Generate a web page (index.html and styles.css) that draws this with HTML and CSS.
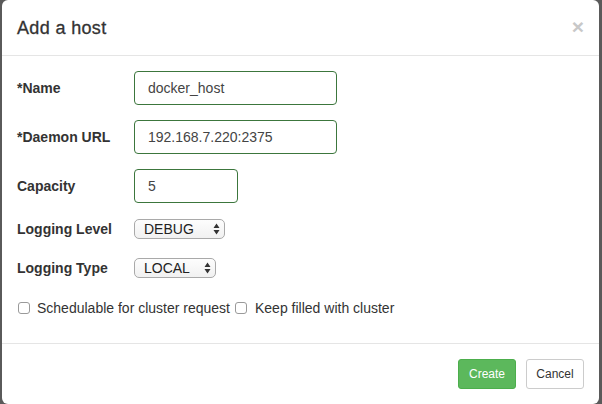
FILE: index.html
```html
<!DOCTYPE html>
<html>
<head>
<meta charset="utf-8">
<link rel="stylesheet" href="styles.css">
</head>
<body>
<div class="modal">
  <div class="modal-header">
    <h4 class="title">Add a host</h4>
    <span class="close">×</span>
  </div>
  <div class="modal-body">
    <div class="row row-input">
      <label class="lbl">*Name</label>
      <input class="field field-lg" type="text" value="docker_host">
    </div>
    <div class="row row-input">
      <label class="lbl">*Daemon URL</label>
      <input class="field field-lg" type="text" value="192.168.7.220:2375">
    </div>
    <div class="row row-input row-last-input">
      <label class="lbl">Capacity</label>
      <input class="field field-sm" type="text" value="5">
    </div>
    <div class="row row-select">
      <label class="lbl">Logging Level</label>
      <div class="select select-level">
        <span class="select-text">DEBUG</span>
        <svg class="arrows" width="7" height="12" viewBox="0 0 7 12"><path d="M3.5 0.5 L6.5 5 H0.5 Z M3.5 11.5 L6.5 7 H0.5 Z" fill="#333"/></svg>
      </div>
    </div>
    <div class="row row-select row-select-last">
      <label class="lbl">Logging Type</label>
      <div class="select select-type">
        <span class="select-text">LOCAL</span>
        <svg class="arrows" width="7" height="12" viewBox="0 0 7 12"><path d="M3.5 0.5 L6.5 5 H0.5 Z M3.5 11.5 L6.5 7 H0.5 Z" fill="#333"/></svg>
      </div>
    </div>
    <div class="row row-check">
      <span class="check"></span>
      <span class="check-text">Schedulable for cluster request</span>
      <span class="check check-second"></span>
      <span class="check-text">Keep filled with cluster</span>
    </div>
  </div>
  <div class="modal-footer">
    <button class="btn btn-success">Create</button>
    <button class="btn btn-default">Cancel</button>
  </div>
</div>
</body>
</html>
```
FILE: styles.css
```css
html, body {
  margin: 0;
  padding: 0;
  height: 100%;
  overflow: hidden;
}
body {
  background: #5a5a5a;
  font-family: "Liberation Sans", Arial, sans-serif;
  color: #333;
  font-size: 14px;
}
.modal {
  margin: 0 3px 0 2px;
  background: #fff;
  border-radius: 6px;
  display: flex;
  flex-direction: column;
}
.modal-header,
.modal-body,
.modal-footer {
  flex-shrink: 0;
}
.modal-header {
  height: 55px;
  border-bottom: 1px solid #e5e5e5;
  padding: 0 15px;
  display: flex;
  align-items: center;
  justify-content: space-between;
}
.title {
  margin: 0;
  font-size: 18px;
  font-weight: normal;
  letter-spacing: 0.35px;
  color: #333;
  padding-top: 1px;
  -webkit-text-stroke: 0.3px #333;
}
.close {
  font-size: 21px;
  font-weight: bold;
  color: #c8c8c8;
  line-height: 1;
  margin-top: -2px;
}
.modal-body {
  padding: 15px 15px 25px;
  display: flex;
  flex-direction: column;
}
.row {
  display: flex;
  align-items: center;
}
.row-input {
  height: 34px;
  margin-bottom: 15px;
}
.row-last-input {
  margin-bottom: 16px;
}
.row-select {
  height: 20px;
  margin-bottom: 19px;
}
.row-select-last {
  margin-bottom: 20px;
}
.row-check {
  height: 20px;
}
.lbl {
  width: 117px;
  font-weight: bold;
  font-size: 14px;
  color: #333;
}
.field {
  box-sizing: border-box;
  height: 34px;
  border: 1px solid #3c763d;
  border-radius: 4px;
  padding: 0 13px;
  font-family: "Liberation Sans", Arial, sans-serif;
  font-size: 14px;
  color: #444;
  background: #fff;
  outline: none;
}
.field-lg {
  width: 203px;
}
.field-sm {
  width: 104px;
}
.select {
  box-sizing: border-box;
  height: 20px;
  border: 1px solid #a9a9a9;
  border-radius: 5px;
  background: linear-gradient(#fdfdfd, #f1f1f1);
  display: flex;
  align-items: center;
  justify-content: space-between;
  padding: 0 4px 0 9px;
}
.select-level {
  width: 91px;
}
.select-type {
  width: 82px;
}
.select-text {
  font-size: 14px;
  color: #222;
}
.arrows {
  display: block;
}
.check {
  box-sizing: border-box;
  width: 12px;
  height: 12px;
  border: 1px solid #9a9a9a;
  border-radius: 3px;
  background: #fff;
  margin-left: 1px;
  margin-right: 7px;
}
.check-second {
  margin-left: 5px;
  margin-right: 8px;
}
.check-text {
  font-size: 14px;
  color: #333;
}
.modal-footer {
  border-top: 1px solid #e5e5e5;
  padding: 15px;
  display: flex;
  justify-content: flex-end;
  gap: 10px;
}
.btn {
  box-sizing: border-box;
  height: 30px;
  width: 58px;
  border-radius: 3px;
  font-family: "Liberation Sans", Arial, sans-serif;
  font-size: 12px;
  padding: 0;
}
.btn-success {
  background: #5cb85c;
  border: 1px solid #4cae4c;
  color: #fff;
}
.btn-default {
  background: #fff;
  border: 1px solid #ccc;
  color: #333;
}
```
